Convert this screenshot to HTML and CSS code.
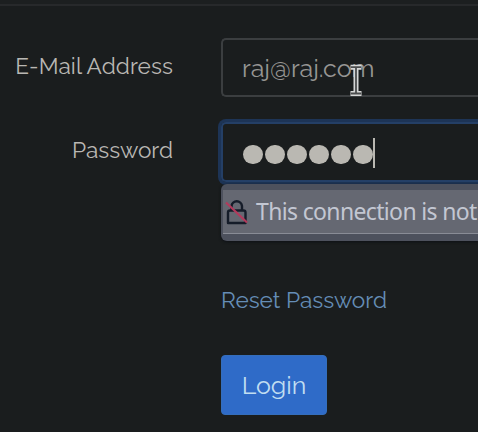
FILE: index.html
```html
<!DOCTYPE html>
<html lang="en">
<head>
<meta charset="utf-8">
<title>Login</title>
<link rel="stylesheet" href="styles.css">
</head>
<body>
<div class="card-header"></div>
<form class="login">
  <label class="label email-label"><span>E-Mail Address</span></label>
  <div class="field email"><span>raj@raj.com</span>
    <svg class="cursor" width="14" height="33" viewBox="0 0 14 33">
      <path d="M1.5 3.2H12.5M7 3.2V29.5M1.5 29.5H12.5" fill="none" stroke="#d6d7d7" stroke-width="5"/>
      <path d="M2 3.2H12M7 3.2V29.5M2 29.5H12" fill="none" stroke="#4c4e4f" stroke-width="1.8"/>
    </svg>
  </div>
  <label class="label password-label"><span>Password</span></label>
  <div class="field password">
    <i class="dot"></i><i class="dot"></i><i class="dot"></i><i class="dot"></i><i class="dot"></i><i class="dot"></i><b class="caret"></b>
    <div class="warning">
      <div class="warning-row">
        <svg class="lock" width="24" height="28" viewBox="0 0 24 28">
          <path d="M3 14.5Q3 12.5 5 12.5H18.5Q20.5 12.5 20.5 14.5V25H3Z" fill="none" stroke="#151c29" stroke-width="2.4" stroke-linejoin="round"/>
          <path d="M6.5 12V8A5.3 5.5 0 0 1 17 8V12" fill="none" stroke="#151c29" stroke-width="2.4"/>
          <path d="M1 4.5L22 24.5" stroke="#b23a5c" stroke-width="2.2"/>
        </svg>
        <span class="message">This connection is not</span>
      </div>
    </div>
  </div>
  <a class="reset"><span>Reset Password</span></a>
  <button class="submit" type="button"><span>Login</span></button>
</form>
</body>
</html>
```
FILE: styles.css
```css
* { box-sizing: border-box; }
body {
  margin: 0;
  height: 432px;
  overflow: hidden;
  background: #1a1d1e;
  color: #b9b7b3;
  font-family: Raleway, Lato, sans-serif;
  font-size: 22.6px;
  line-height: 30px;
}
.card-header {
  height: 6px;
  background: #1c1f20;
  border-bottom: 2px solid #27292b;
}
.login {
  display: grid;
  grid-template-columns: 173px 257px;
  grid-template-rows: 59px 84px auto auto;
  column-gap: 48px;
  padding-top: 32px;
}
.label {
  padding-top: 13px;
  text-align: right;
  white-space: nowrap;
}
.email-label { letter-spacing: 0.1px; }
.field {
  position: relative;
  display: flex;
  align-items: center;
  height: 59px;
  padding-left: 19px;
  border: 2px solid #3b3e40;
  border-right: 0;
  border-radius: 5px 0 0 5px;
}
.email { color: #969593; font-size: 25px; }
.cursor { position: absolute; left: 126px; top: 24px; }
.password-label { margin-top: 25px; }
.password {
  gap: 2.4px;
  height: 60px;
  margin-top: 25px;
  padding-left: 20px;
  border-color: #243f66;
  box-shadow: 0 0 0 3px #1d3456;
}
.dot {
  width: 19.6px;
  height: 19.6px;
  margin-top: 5px;
  border-radius: 50%;
  background: #bab8b2;
}
.caret {
  width: 2px;
  height: 30px;
  margin: 1px 0 0 -2px;
  background: #bab8b2;
}
.warning {
  position: absolute;
  left: -2px;
  top: 60px;
  width: 257px;
  height: 57px;
  padding: 6px 0 0 2px;
  border-radius: 6px 0 0 6px;
  background: #4d515d;
  box-shadow: 0 1px 3px #0d1015;
}
.warning-row {
  display: flex;
  align-items: center;
  height: 44px;
  border-bottom: 1px solid #898c96;
  background: #656872;
}
.lock { margin: 0 0 0 2px; flex: none; }
.message {
  margin: 0 0 2px 7px;
  color: #c3c7d2;
  font-family: "Noto Sans", sans-serif;
  font-size: 23px;
  letter-spacing: -0.65px;
  white-space: nowrap;
}
.reset, .submit { grid-column: 2; justify-self: start; }
.reset { margin-top: 104px; color: #658db6; }
.submit {
  width: 106px;
  height: 60px;
  margin-top: 40px;
  padding: 0;
  border: 1px solid #346ebc;
  border-radius: 4px;
  background: #2f6bc8;
  color: #c1def1;
  font: 25px Raleway, Lato, sans-serif;
}
```
